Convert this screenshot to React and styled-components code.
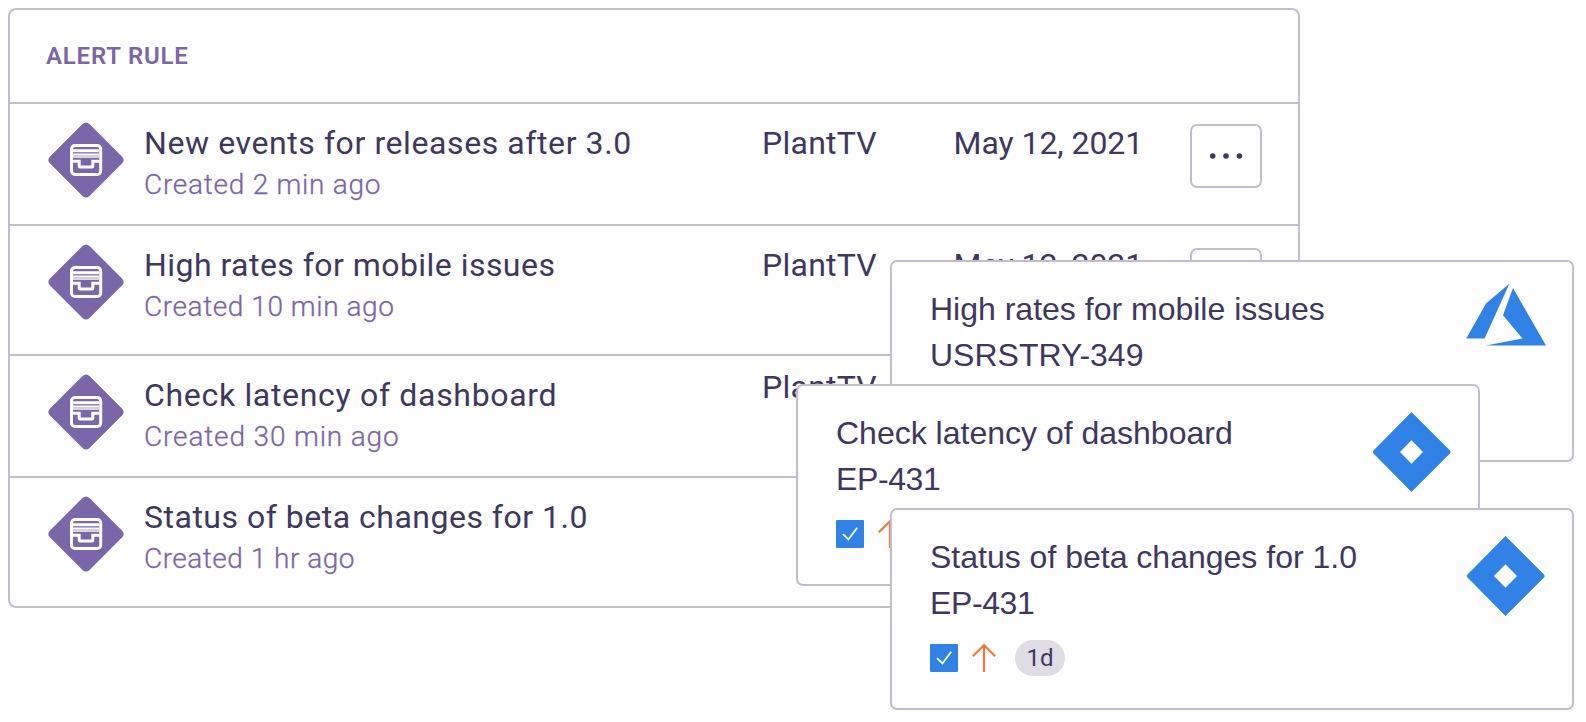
import React from 'react';
import styled, { createGlobalStyle } from 'styled-components';

const color = {
  line: '#c4bdcf',
  ink: '#3e3861',
  purple: '#7b66a9',
  blue: '#3182e7',
  orange: '#f2793c',
  pill: '#dfdce5',
  bg: '#fefefe',
};

const GlobalStyle = createGlobalStyle`
  * { box-sizing: border-box; }
  body { margin: 0; background: ${color.bg}; }
`;

const Stage = styled.main`
  position: relative;
  width: 1586px;
  height: 722px;
  padding: 8px;
  overflow: hidden;
  background: ${color.bg};
  color: ${color.ink};
  font-family: Roboto, 'Liberation Sans', sans-serif;
`;

const Table = styled.section`
  width: 1292px;
  height: 600px;
  border: 2px solid ${color.line};
  border-radius: 8px;
`;

const TableHeader = styled.header`
  height: 92px;
  padding: 32px 36px 0;
  color: ${color.purple};
  font-size: 24px;
  line-height: 28px;
  font-weight: 600;
  letter-spacing: 0.8px;
`;

const Row = styled.div`
  display: grid;
  grid-template-columns: 96px 618px 191.5px 236.5px 72px;
  align-items: start;
  height: ${(p) => p.$height}px;
  padding: 18px 0 0 38px;
  border-top: 2px solid ${color.line};
`;

const RuleIcon = styled.svg`
  display: block;
  width: 76px;
  height: 76px;
`;

const RuleText = styled.div`
  display: flex;
  flex-direction: column;
  gap: 6px;
  padding-top: 2px;
  white-space: nowrap;
`;

const RuleTitle = styled.div`
  font-size: 32px;
  line-height: 38px;
  letter-spacing: ${(p) => p.$tracking}px;
`;

const RuleMeta = styled.div`
  color: ${color.purple};
  font-size: 28px;
  font-weight: 300;
  line-height: 34px;
  letter-spacing: ${(p) => p.$tracking}px;
  -webkit-text-stroke: 0.3px ${color.purple};
`;

const Cell = styled.div`
  padding-top: 2px;
  margin-top: ${(p) => (p.$raised ? -8 : 0)}px;
  font-size: 32px;
  line-height: 38px;
  letter-spacing: ${(p) => p.$tracking}px;
  white-space: nowrap;
`;

const MenuButton = styled.button`
  display: flex;
  align-items: center;
  justify-content: center;
  width: 72px;
  height: 64px;
  margin-top: ${(p) => p.$offset}px;
  padding: 0;
  border: 2px solid ${color.line};
  border-radius: 7px;
  background: ${color.bg};
`;

const Card = styled.article`
  position: absolute;
  left: ${(p) => p.$x}px;
  top: ${(p) => p.$y}px;
  display: flex;
  justify-content: space-between;
  width: 684px;
  height: 202px;
  padding: 24px 26px 0 38px;
  border: 2px solid ${color.line};
  border-radius: 7px;
  background: ${color.bg};
  font-family: 'Liberation Sans', sans-serif;
`;

const CardLine = styled.div`
  font-size: 32px;
  line-height: 46px;
  letter-spacing: ${(p) => p.$tracking || 0}px;
  white-space: nowrap;
`;

const Tags = styled.div`
  display: flex;
  align-items: center;
  height: 36px;
  margin-top: 14px;
`;

const CheckMark = styled.svg`
  width: 28px;
  height: 28px;
`;

const PriorityArrow = styled.svg`
  width: 24px;
  height: 28px;
  margin: 0 19px 0 14px;
`;

const Pill = styled.span`
  width: 50px;
  height: 36px;
  border-radius: 18px;
  background: ${color.pill};
  font-family: Roboto, sans-serif;
  font-size: 24px;
  line-height: 36px;
  text-align: center;
`;

const Logo = styled.svg`
  flex: none;
  width: 80px;
  height: 80px;
  overflow: visible;
`;

function InboxDiamond() {
  return (
    <RuleIcon viewBox="48 122 76 76">
      <path
        d="M89.5 124 122.2 156.7Q125.2 160 122.2 163.3L89.5 196Q86 199.2 82.5 196L49.8 163.3Q46.8 160 49.8 156.7L82.5 124Q86 120.8 89.5 124Z"
        fill={color.purple}
      />
      <rect x="71.5" y="145.5" width="29.2" height="29" rx="3.5" fill="none" stroke="#fff" strokeWidth="3" />
      <path d="M73 149.2H99V152.2H73ZM73 153.6H99V157.8H73Z" fill="#fff" />
      <path d="M73 156H99" stroke="#b9b0cc" strokeWidth="1.2" />
      <path d="M72.5 161.2H79.2V166.2Q79.2 167 80 167H92Q92.8 167 92.8 166.2V161.2H99.5" fill="none" stroke="#fff" strokeWidth="3" />
    </RuleIcon>
  );
}

function Dots() {
  return (
    <svg width="34" height="8" viewBox="0 0 34 8" fill={color.ink}>
      <circle cx="3.7" cy="4" r="2.8" />
      <circle cx="17" cy="4" r="2.8" />
      <circle cx="30.4" cy="4" r="2.8" />
    </svg>
  );
}

function AzureLogo() {
  return (
    <Logo viewBox="1466 286 80 80" fill={color.blue}>
      <path d="M1509.5 283.5 1486 303.5 1466.2 338.4H1484.6Z" />
      <path d="M1513 288 1503 315.3 1522.4 338.6 1486 345.6H1546Z" />
    </Logo>
  );
}

function JiraLogo() {
  return (
    <Logo viewBox="0 -2 80 80" fill={color.blue}>
      <path
        fillRule="evenodd"
        d="M39.5 0 78 38.5Q79.2 40 78 41.5L39.5 80 1.5 41.5Q.2 40 1.5 38.5ZM39.5 28.3 28 40 39.5 51.7 51 40Z"
      />
    </Logo>
  );
}

function CardTags({ estimate }) {
  return (
    <Tags>
      <CheckMark viewBox="0 0 28 28">
        <rect width="28" height="28" rx="1" fill={color.blue} />
        <path d="M7 14.2 12.4 19.5 21.2 7.8" fill="none" stroke="#fff" strokeWidth="1.8" />
      </CheckMark>
      <PriorityArrow viewBox="0 0 24 28" fill="none" stroke={color.orange} strokeWidth="2.2">
        <path d="M12 28V1.5M.8 12.2 12 1.2 23.2 12.2" />
      </PriorityArrow>
      {estimate && <Pill>{estimate}</Pill>}
    </Tags>
  );
}

const rules = [
  { title: 'New events for releases after 3.0', tt: 0.59, meta: 'Created 2 min ago', mt: 0.74, height: 122, project: 'PlantTV', date: 'May 12, 2021', menu: 0 },
  { title: 'High rates for mobile issues', tt: 0.46, meta: 'Created 10 min ago', mt: 0.57, height: 130, project: 'PlantTV', date: 'May 12, 2021', menu: 2 },
  { title: 'Check latency of dashboard', tt: 0.68, meta: 'Created 30 min ago', mt: 0.85, height: 122, project: 'PlantTV', raised: true },
  { title: 'Status of beta changes for 1.0', tt: 0.5, meta: 'Created 1 hr ago', mt: 0.5, height: 130 },
];

const cards = [
  { x: 890, y: 260, title: 'High rates for mobile issues', id: 'USRSTRY-349', azure: true },
  { x: 796, y: 384, title: 'Check latency of dashboard', id: 'EP-431', tracking: -0.4 },
  { x: 890, y: 508, title: 'Status of beta changes for 1.0', id: 'EP-431', tracking: -0.4, estimate: '1d' },
];

export default function App() {
  return (
    <Stage>
      <GlobalStyle />
      <Table>
        <TableHeader>ALERT RULE</TableHeader>
        {rules.map((r) => (
          <Row key={r.title} $height={r.height}>
            <InboxDiamond />
            <RuleText>
              <RuleTitle $tracking={r.tt}>{r.title}</RuleTitle>
              <RuleMeta $tracking={r.mt}>{r.meta}</RuleMeta>
            </RuleText>
            {r.project && <Cell $raised={r.raised} $tracking={0.25}>{r.project}</Cell>}
            {r.date && <Cell $tracking={-0.05}>{r.date}</Cell>}
            {r.date && (
              <MenuButton $offset={r.menu + 2} aria-label="More actions">
                <Dots />
              </MenuButton>
            )}
          </Row>
        ))}
      </Table>
      {cards.map((c) => (
        <Card key={c.title} $x={c.x} $y={c.y}>
          <div>
            <CardLine>{c.title}</CardLine>
            <CardLine $tracking={c.tracking}>{c.id}</CardLine>
            {!c.azure && <CardTags estimate={c.estimate} />}
          </div>
          {c.azure ? <AzureLogo /> : <JiraLogo />}
        </Card>
      ))}
    </Stage>
  );
}
